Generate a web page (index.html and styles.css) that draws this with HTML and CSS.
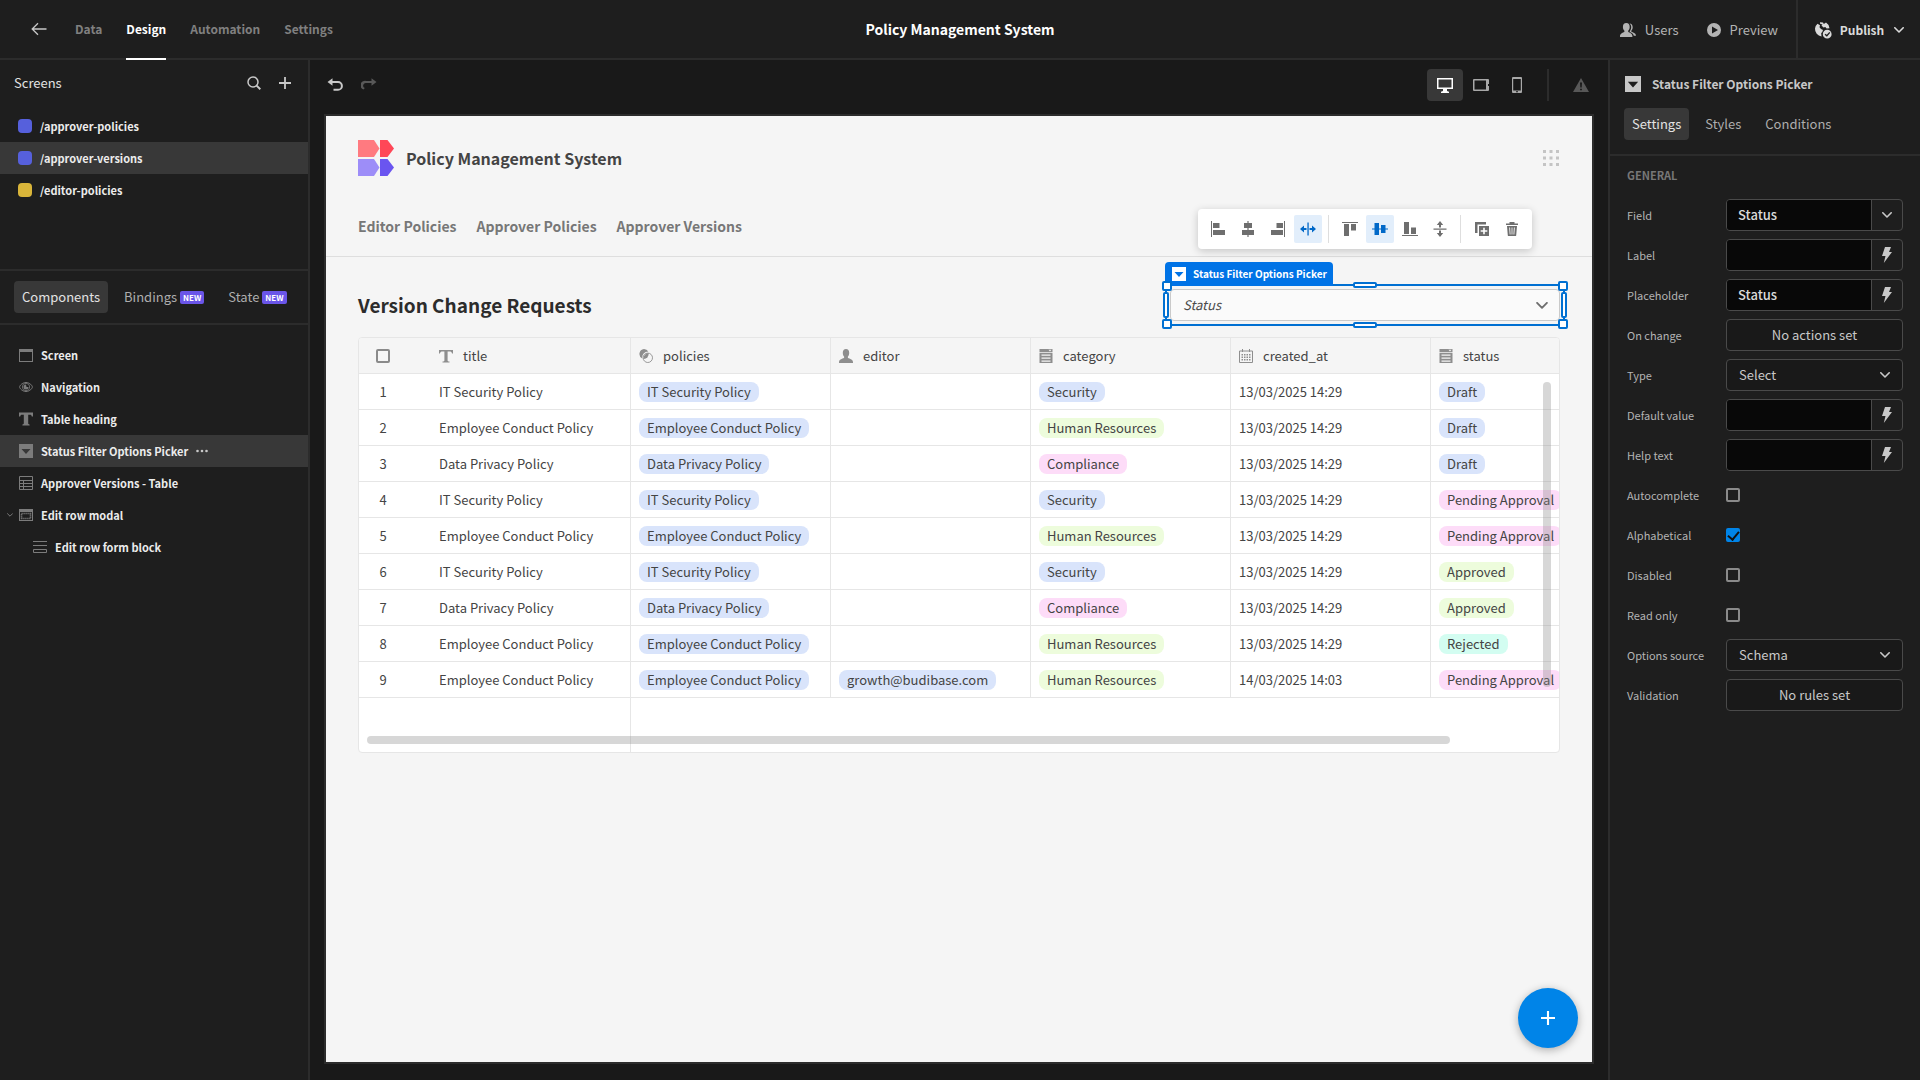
FILE: index.html
```html
<!DOCTYPE html>
<html lang="en">
<head>
    <meta charset="UTF-8">
    <meta name="viewport" content="width=device-width, initial-scale=1.0">
    <title>Policy Management System</title>
    <link rel="stylesheet" href="styles.css">
</head>
<body>
    <!-- Icon sprite -->
    <svg class="sprite" aria-hidden="true">
        <symbol id="i-back" viewBox="0 0 16 14"><path d="M15.500 7H1.500M7 1.200 1.200 7 7 12.800" fill="none" stroke="currentColor" stroke-width="1.300"/></symbol>
        <symbol id="i-users" viewBox="0 0 16 14"><path d="M6.300 0C8.600 0 9.700 1.600 9.700 3.900c0 1.700-.7 2.900-1.500 3.800v1c0 .5 4.200 1.300 4.200 4.200V14H0v-1.100C0 10 4.400 9.200 4.400 8.700v-1C3.600 6.800 2.900 5.600 2.900 3.900 2.900 1.600 4 0 6.300 0z"/><path d="M9.500.5c2 .1 3.200 1.600 3.200 3.700 0 1.500-.5 2.700-1.400 3.500v.9c0 .5 4.700 1.300 4.700 4.100h-2.200c-.4-2.400-2.600-3.100-4-3.700V8.200c.8-1 1.400-2.400 1.400-4.100 0-1.500-.6-2.800-1.700-3.600z"/></symbol>
        <symbol id="i-user" viewBox="0 0 14 14"><path d="M7 0c2.100 0 3.200 1.600 3.200 3.700 0 1.700-.5 3-1.300 3.900v1.200c0 .8 5.100 1 5.100 4.200v1H0v-1c0-3.200 5.100-3.400 5.100-4.200V7.600c-.8-.9-1.300-2.200-1.300-3.900C3.800 1.600 4.900 0 7 0z"/></symbol>
        <symbol id="i-play" viewBox="0 0 14 14"><path fill-rule="evenodd" d="M7 0a7 7 0 1 0 0 14A7 7 0 0 0 7 0zM5 3.500v7L11 7z"/></symbol>
        <symbol id="i-globe" viewBox="0 0 18 18"><path d="M3.500 2.800 6 4.300l-.5 2 1.500 1.700 2 1-.8 2.300-1 .7.300 3.400A7.500 7.500 0 0 1 1 7.500a7.500 7.500 0 0 1 2.500-4.700zM6 1.300l3 .2.800 1.400 2.200-1.300a7.500 7.500 0 0 1 3.500 5.600l-2.900.2-1.300-1.500-1.800.6-2-1.900 1-1.200-2.400-.6z"/><path fill-rule="evenodd" d="M13.200 8.800a4.400 4.400 0 1 0 0 8.800 4.400 4.400 0 0 0 0-8.800zm2.100 2.100 1 .8-3.400 4-2.300-2 .9-1 1.300 1.100z"/></symbol>
        <symbol id="i-chevron" viewBox="0 0 10 6"><path d="M.8.800 5 5 9.200.8" fill="none" stroke="currentColor" stroke-width="1.600" stroke-linecap="round" stroke-linejoin="round"/></symbol>
        <symbol id="i-search" viewBox="0 0 14 14"><g fill="none" stroke="currentColor" stroke-width="1.500"><circle cx="6" cy="6" r="5"/><path d="m9.600 9.600 3.700 3.700" stroke-width="2"/></g></symbol>
        <symbol id="i-plus" viewBox="0 0 12 12"><path d="M6 0v12M0 6h12" fill="none" stroke="currentColor" stroke-width="1.800"/></symbol>
        <symbol id="i-undo" viewBox="0 0 16 14"><path d="M5.500.2V3H11a4.500 4.500 0 0 1 0 9.800H6.500v-2H11a2.500 2.500 0 0 0 0-5.800H5.500v2.800L.5 4z"/></symbol>
        <symbol id="i-redo" viewBox="0 0 16 14"><path d="M10.500.2V3H5.500a4.500 4.500 0 0 0-3 8.600l1.300-1.500A2.700 2.700 0 0 1 5.500 5h5v2.800l5-3.800z"/></symbol>
        <symbol id="i-desktop" viewBox="0 0 16 16"><path fill-rule="evenodd" d="M0 1h16v11h-6v2l2 .8V16H4v-1.200l2-.8v-2H0zm1.500 1.500v8h13v-8z"/></symbol>
        <symbol id="i-tablet" viewBox="0 0 16 14"><path fill-rule="evenodd" d="M1 1h14a1 1 0 0 1 1 1v4h-1v2h1v4a1 1 0 0 1-1 1H1a1 1 0 0 1-1-1V2a1 1 0 0 1 1-1zm.5 1.500v9H13v-9z"/></symbol>
        <symbol id="i-phone" viewBox="0 0 10 16"><path fill-rule="evenodd" d="M1 0h8a1 1 0 0 1 1 1v14a1 1 0 0 1-1 1H1a1 1 0 0 1-1-1V1a1 1 0 0 1 1-1zm.2 2v11.500h7.600V2zM4 14.300v.9h2v-.9z"/></symbol>
        <symbol id="i-alert" viewBox="0 0 16 14"><path fill-rule="evenodd" d="M8 0 16 14H0zM7 4.500l.3 5h1.400l.3-5zm.1 6.200v1.600h1.800v-1.600z"/></symbol>
        <symbol id="i-window" viewBox="0 0 14 14"><path fill-rule="evenodd" d="M0 1h14v13H0zm1 3v9h12V4z"/></symbol>
        <symbol id="i-eye" viewBox="0 0 14 14"><path d="M7 2.500c3.800 0 6.400 3.300 6.400 4.500S10.800 11.500 7 11.500.6 8.200.6 7 3.200 2.500 7 2.500z" fill="none" stroke="currentColor"/><circle cx="7" cy="7" r="3.700" fill="none" stroke="currentColor" stroke-width=".8"/><path d="M7 4.500A2.500 2.500 0 1 0 9.500 7H7.500z"/></symbol>
        <symbol id="i-text" viewBox="0 0 14 14"><path d="M0 1h14v3.500h-1C12.700 3 12 2.500 10.500 2.500H8.600v9c0 .8.600.9 1.900 1v1h-7v-1c1.300-.1 1.900-.2 1.900-1v-9H3.500C2 2.500 1.300 3 1 4.500H0z"/></symbol>
        <symbol id="i-text-bold" viewBox="0 0 14 14"><path d="M0 .5h14v4h-1.200C12.500 3.200 12 2.800 10.500 2.800H9.200v8.500c0 .9.400 1 1.400 1.100v1.100H3.400v-1.100c1-.1 1.400-.2 1.400-1.100V2.800H3.500C2 2.800 1.500 3.200 1.200 4.500H0z"/></symbol>
        <symbol id="i-picker" viewBox="0 0 14 14"><path fill-rule="evenodd" d="M0 0h14v14H0zM2.500 5 7 10l4.500-5z"/></symbol>
        <symbol id="i-table" viewBox="0 0 14 14"><path d="M.5.500h13v13H.5zM.5 4.500h13M.5 7.500h13M.5 10.500h13M4.500 4.500v9" fill="none" stroke="currentColor"/></symbol>
        <symbol id="i-modal" viewBox="0 0 14 14"><path fill-rule="evenodd" d="M0 1h14v12H0zm1 3v8h12V4z"/><path d="M2.500 5.500h9v5h-9z" fill="none" stroke="currentColor" stroke-width="1.600" stroke-dasharray="1.200 .8"/></symbol>
        <symbol id="i-form" viewBox="0 0 14 14"><path d="M0 1.500h14M0 5.500h14M.5 9.500h13v3H.5z" fill="none" stroke="currentColor"/></symbol>
        <symbol id="i-more" viewBox="0 0 12 4"><circle cx="1.500" cy="2" r="1.300"/><circle cx="6" cy="2" r="1.300"/><circle cx="10.500" cy="2" r="1.300"/></symbol>
        <symbol id="i-grid" viewBox="0 0 16 16"><path d="M0 0h3v3H0zM6.500 0h3v3h-3zM13 0h3v3h-3zM0 6.500h3v3H0zM6.500 6.500h3v3h-3zM13 6.500h3v3h-3zM0 13h3v3H0zM6.500 13h3v3h-3zM13 13h3v3h-3z"/></symbol>
        <symbol id="i-left" viewBox="0 0 16 16"><path d="M1 0h1v16H1zM3 2h6.500v5H3zM3 9h12v5H3z"/></symbol>
        <symbol id="i-center" viewBox="0 0 16 16"><path d="M7.400 0h1.200v16H7.400zM4 2h8v5H4zM2 9h12v5H2z"/></symbol>
        <symbol id="i-right" viewBox="0 0 16 16"><path d="M14 0h1v16h-1zM6.500 2H13v5H6.500zM1 9h12v5H1z"/></symbol>
        <symbol id="i-stretch" viewBox="0 0 16 16"><path d="M7.400 1.500h1.300v13H7.400zM4 4.500V7h2.500v2H4v2.500L0 8zM12 4.500V7H9.500v2H12v2.500L16 8z"/></symbol>
        <symbol id="i-top" viewBox="0 0 16 16"><path d="M0 1h16v1H0zM2 3h5v12H2zM9 3h5v6.500H9z"/></symbol>
        <symbol id="i-middle" viewBox="0 0 16 16"><path d="M0 7.400h16v1.200H0zM2.500 2H7v12H2.500zM9 4h4.500v8H9z"/></symbol>
        <symbol id="i-bottom" viewBox="0 0 16 16"><path d="M0 14h16v1H0zM2 1h5v12H2zM9 6.500h5V13H9z"/></symbol>
        <symbol id="i-vstretch" viewBox="0 0 16 16"><path d="M1.500 7.400h13v1.300h-13zM4.800 4H7v2.500h2V4h2.200L8 0zM4.800 12H7V9.500h2V12h2.200L8 16z"/></symbol>
        <symbol id="i-duplicate" viewBox="0 0 16 16"><path d="M1 1h11v2.500H3.500V12H1z"/><path fill-rule="evenodd" d="M5 5h10v10H5zm4.200 1.700v2.500H6.700v1.600h2.500v2.500h1.600v-2.500h2.500V9.200h-2.500V6.700z"/></symbol>
        <symbol id="i-trash" viewBox="0 0 16 16"><path fill-rule="evenodd" d="M5.500 1h5v1.500H14V4H2V2.500h3.500zM3 5h10l-.8 9.500a.8.8 0 0 1-.8.6H4.600a.8.8 0 0 1-.8-.6zm2.200 1.500.5 7h.8l-.4-7zm2.400 0v7h.8v-7zm2.300 0-.4 7h.8l.5-7z"/></symbol>
        <symbol id="i-link" viewBox="0 0 14 14"><path d="M5 0a5 5 0 0 1 4.300 2.500 6 6 0 0 0-6 7A5 5 0 0 1 5 0z"/><circle cx="8.800" cy="8.800" r="4.700" fill="none" stroke="currentColor" stroke-width=".9"/><path d="M9.600 4a5 5 0 0 1-5.200 5.900A5.600 5.600 0 0 1 9.600 4z"/></symbol>
        <symbol id="i-date" viewBox="0 0 14 14"><path d="M.5 2h13v11.500H.5zM3.500 0v3M10.500 0v3" fill="none" stroke="currentColor"/><path d="M2.500 5.800h9M2.500 8.300h9M2.500 10.800h9" fill="none" stroke="currentColor" stroke-width="1.500" stroke-dasharray="1.500 1"/></symbol>
        <symbol id="i-options" viewBox="0 0 14 14"><path fill-rule="evenodd" d="M.5 0h13v3.200H.5zM9.500.8l1.500 1.800L12.500.8zM.5 4h13v10H.5zm2 1.500v1.200h9V5.500zm0 3v1.200h9V8.500zm0 3v1.200h9v-1.200z"/></symbol>
        <symbol id="i-bolt" viewBox="0 0 10 16"><path d="M3 0h6L7 5h3L1.800 16l1.700-7H0z"/></symbol>
    </svg>

    <header class="topbar">
        <nav class="top-nav">
            <a class="back" href="#" aria-label="Back"><svg width="16" height="14"><use href="#i-back"/></svg></a>
            <a href="#">Data</a>
            <a class="active" href="#">Design</a>
            <a href="#">Automation</a>
            <a href="#">Settings</a>
        </nav>
        <h1>Policy Management System</h1>
        <div class="top-actions">
            <button class="users"><svg width="16" height="14"><use href="#i-users"/></svg>Users</button>
            <button class="preview-btn"><svg width="14" height="14"><use href="#i-play"/></svg>Preview</button>
            <button class="publish"><svg width="18" height="18"><use href="#i-globe"/></svg>Publish<svg class="caret" width="10" height="6"><use href="#i-chevron"/></svg></button>
        </div>
    </header>

    <div class="builder">
        <aside class="left-panel">
            <section class="screens">
                <div class="panel-head">
                    <h2>Screens</h2>
                    <button aria-label="Search"><svg width="14" height="14"><use href="#i-search"/></svg></button>
                    <button aria-label="Add screen"><svg width="12" height="12"><use href="#i-plus"/></svg></button>
                </div>
                <a class="screen" href="#"><span class="swatch"></span>/approver-policies</a>
                <a class="screen selected" href="#"><span class="swatch"></span>/approver-versions</a>
                <a class="screen" href="#"><span class="swatch yellow"></span>/editor-policies</a>
            </section>
            <div class="tabs left-tabs">
                <button class="active">Components</button>
                <button>Bindings<span class="new">NEW</span></button>
                <button>State<span class="new">NEW</span></button>
            </div>
            <nav class="tree">
                <a href="#"><svg width="14" height="14"><use href="#i-window"/></svg>Screen</a>
                <a href="#"><svg width="14" height="14"><use href="#i-eye"/></svg>Navigation</a>
                <a href="#"><svg width="14" height="14"><use href="#i-text-bold"/></svg>Table heading</a>
                <a class="selected" href="#"><svg width="14" height="14"><use href="#i-picker"/></svg>Status Filter Options Picker<svg class="more" width="12" height="4"><use href="#i-more"/></svg></a>
                <a href="#"><svg width="14" height="14"><use href="#i-table"/></svg>Approver Versions - Table</a>
                <a class="open" href="#"><svg class="arrow" width="6" height="4"><use href="#i-chevron"/></svg><svg width="14" height="14"><use href="#i-modal"/></svg>Edit row modal</a>
                <a class="child" href="#"><svg width="14" height="14"><use href="#i-form"/></svg>Edit row form block</a>
            </nav>
        </aside>

        <main class="center">
            <div class="canvas-bar">
                <button aria-label="Undo"><svg width="16" height="14"><use href="#i-undo"/></svg></button>
                <button class="dim" aria-label="Redo"><svg width="16" height="14"><use href="#i-redo"/></svg></button>
                <div class="devices">
                    <button class="active" aria-label="Desktop"><svg width="16" height="16"><use href="#i-desktop"/></svg></button>
                    <button aria-label="Tablet"><svg width="16" height="14"><use href="#i-tablet"/></svg></button>
                    <button aria-label="Mobile"><svg width="10" height="16"><use href="#i-phone"/></svg></button>
                </div>
                <button class="dim errors" aria-label="Errors"><svg width="16" height="14"><use href="#i-alert"/></svg></button>
            </div>

            <div class="canvas">
                <header class="app-head">
                    <svg width="36" height="36" viewBox="0 0 36 36">
                        <path d="M0 0h16l5.500 8.500L16 17H0z" fill="#ff7a80"/>
                        <path d="M22 0h7.500L36 8.500 29.500 17H22z" fill="#ff4757"/>
                        <path d="M0 19h16l5.500 8.500L16 36H0z" fill="#9d8df8"/>
                        <path d="M22 19h7.500l6.500 8.500-6.500 8.500H22z" fill="#6a55f0"/>
                    </svg>
                    <h2>Policy Management System</h2>
                    <button aria-label="Apps"><svg width="16" height="16"><use href="#i-grid"/></svg></button>
                </header>
                <nav class="app-nav">
                    <a href="#">Editor Policies</a>
                    <a href="#">Approver Policies</a>
                    <a href="#">Approver Versions</a>
                </nav>

                <div class="app-body">
                    <div class="title-row">
                        <h3>Version Change Requests</h3>
                        <div class="picker">
                            <select aria-label="Status">
                                <option>Status</option>
                            </select>
                            <svg width="12" height="7"><use href="#i-chevron"/></svg>

                            <!-- Selection frame and its handles -->
                            <div class="frame">
                                <span class="tag"><svg width="14" height="14"><use href="#i-picker"/></svg>Status Filter Options Picker</span>
                                <i class="side n"></i><i class="side s"></i><i class="side w"></i><i class="side e"></i>
                                <i class="corner nw"></i><i class="corner ne"></i><i class="corner sw"></i><i class="corner se"></i>
                            </div>

                            <div class="align-bar">
                                <button aria-label="Align left"><svg width="16" height="16"><use href="#i-left"/></svg></button>
                                <button aria-label="Align centre"><svg width="16" height="16"><use href="#i-center"/></svg></button>
                                <button aria-label="Align right"><svg width="16" height="16"><use href="#i-right"/></svg></button>
                                <button class="active" aria-label="Stretch horizontally"><svg width="16" height="16"><use href="#i-stretch"/></svg></button>
                                <hr>
                                <button aria-label="Align top"><svg width="16" height="16"><use href="#i-top"/></svg></button>
                                <button class="active" aria-label="Align middle"><svg width="16" height="16"><use href="#i-middle"/></svg></button>
                                <button aria-label="Align bottom"><svg width="16" height="16"><use href="#i-bottom"/></svg></button>
                                <button aria-label="Stretch vertically"><svg width="16" height="16"><use href="#i-vstretch"/></svg></button>
                                <hr>
                                <button aria-label="Duplicate"><svg width="16" height="16"><use href="#i-duplicate"/></svg></button>
                                <button aria-label="Delete"><svg width="16" height="16"><use href="#i-trash"/></svg></button>
                            </div>
                        </div>
                    </div>

                    <div class="grid">
                        <table>
                            <colgroup>
                                <col class="c-num"><col class="c-title"><col><col><col><col><col>
                            </colgroup>
                            <thead>
                                <tr>
                                    <th class="num"><input class="check" type="checkbox" aria-label="Select all"></th>
                                    <th><span class="th"><svg width="14" height="14"><use href="#i-text"/></svg>title</span></th>
                                    <th><span class="th"><svg width="14" height="14"><use href="#i-link"/></svg>policies</span></th>
                                    <th><span class="th"><svg width="14" height="14"><use href="#i-user"/></svg>editor</span></th>
                                    <th><span class="th"><svg width="14" height="14"><use href="#i-options"/></svg>category</span></th>
                                    <th><span class="th"><svg width="14" height="14"><use href="#i-date"/></svg>created_at</span></th>
                                    <th><span class="th"><svg width="14" height="14"><use href="#i-options"/></svg>status</span></th>
                                </tr>
                            </thead>
                            <tbody>
                                <tr>
                                    <td class="num">1</td><td>IT Security Policy</td>
                                    <td><span class="pill blue">IT Security Policy</span></td><td></td>
                                    <td><span class="pill blue">Security</span></td><td>13/03/2025 14:29</td>
                                    <td><span class="pill blue">Draft</span></td>
                                </tr>
                                <tr>
                                    <td class="num">2</td><td>Employee Conduct Policy</td>
                                    <td><span class="pill blue">Employee Conduct Policy</span></td><td></td>
                                    <td><span class="pill green">Human Resources</span></td><td>13/03/2025 14:29</td>
                                    <td><span class="pill blue">Draft</span></td>
                                </tr>
                                <tr>
                                    <td class="num">3</td><td>Data Privacy Policy</td>
                                    <td><span class="pill blue">Data Privacy Policy</span></td><td></td>
                                    <td><span class="pill pink">Compliance</span></td><td>13/03/2025 14:29</td>
                                    <td><span class="pill blue">Draft</span></td>
                                </tr>
                                <tr>
                                    <td class="num">4</td><td>IT Security Policy</td>
                                    <td><span class="pill blue">IT Security Policy</span></td><td></td>
                                    <td><span class="pill blue">Security</span></td><td>13/03/2025 14:29</td>
                                    <td><span class="pill pink">Pending Approval</span></td>
                                </tr>
                                <tr>
                                    <td class="num">5</td><td>Employee Conduct Policy</td>
                                    <td><span class="pill blue">Employee Conduct Policy</span></td><td></td>
                                    <td><span class="pill green">Human Resources</span></td><td>13/03/2025 14:29</td>
                                    <td><span class="pill pink">Pending Approval</span></td>
                                </tr>
                                <tr>
                                    <td class="num">6</td><td>IT Security Policy</td>
                                    <td><span class="pill blue">IT Security Policy</span></td><td></td>
                                    <td><span class="pill blue">Security</span></td><td>13/03/2025 14:29</td>
                                    <td><span class="pill green">Approved</span></td>
                                </tr>
                                <tr>
                                    <td class="num">7</td><td>Data Privacy Policy</td>
                                    <td><span class="pill blue">Data Privacy Policy</span></td><td></td>
                                    <td><span class="pill pink">Compliance</span></td><td>13/03/2025 14:29</td>
                                    <td><span class="pill green">Approved</span></td>
                                </tr>
                                <tr>
                                    <td class="num">8</td><td>Employee Conduct Policy</td>
                                    <td><span class="pill blue">Employee Conduct Policy</span></td><td></td>
                                    <td><span class="pill green">Human Resources</span></td><td>13/03/2025 14:29</td>
                                    <td><span class="pill teal">Rejected</span></td>
                                </tr>
                                <tr>
                                    <td class="num">9</td><td>Employee Conduct Policy</td>
                                    <td><span class="pill blue">Employee Conduct Policy</span></td>
                                    <td><span class="pill blue">growth@budibase.com</span></td>
                                    <td><span class="pill green">Human Resources</span></td><td>14/03/2025 14:03</td>
                                    <td><span class="pill pink">Pending Approval</span></td>
                                </tr>
                            </tbody>
                            <tfoot>
                                <tr><td class="num"></td><td></td><td colspan="5"></td></tr>
                            </tfoot>
                        </table>
                        <div class="v-scroll"></div>
                        <div class="h-scroll"></div>
                    </div>
                </div>

                <button class="fab" aria-label="Add component"><svg width="14" height="14"><use href="#i-plus"/></svg></button>
            </div>
        </main>

        <aside class="right-panel">
            <h2><svg width="16" height="16"><use href="#i-picker"/></svg>Status Filter Options Picker</h2>
            <div class="tabs">
                <button class="active">Settings</button>
                <button>Styles</button>
                <button>Conditions</button>
            </div>
            <form class="settings">
                <h3>GENERAL</h3>
                <div class="setting">
                    <label for="field">Field</label>
                    <div class="combo"><input id="field" type="text" value="Status"><button type="button" aria-label="Choose field"><svg width="10" height="6"><use href="#i-chevron"/></svg></button></div>
                </div>
                <div class="setting">
                    <label for="label">Label</label>
                    <div class="combo"><input id="label" type="text"><button type="button" aria-label="Bind label"><svg width="10" height="16"><use href="#i-bolt"/></svg></button></div>
                </div>
                <div class="setting">
                    <label for="placeholder">Placeholder</label>
                    <div class="combo"><input id="placeholder" type="text" value="Status"><button type="button" aria-label="Bind placeholder"><svg width="10" height="16"><use href="#i-bolt"/></svg></button></div>
                </div>
                <div class="setting">
                    <label for="on-change">On change</label>
                    <button class="wide" id="on-change" type="button">No actions set</button>
                </div>
                <div class="setting">
                    <label for="type">Type</label>
                    <div class="select"><select id="type"><option>Select</option></select><svg width="10" height="6"><use href="#i-chevron"/></svg></div>
                </div>
                <div class="setting">
                    <label for="default">Default value</label>
                    <div class="combo"><input id="default" type="text"><button type="button" aria-label="Bind default value"><svg width="10" height="16"><use href="#i-bolt"/></svg></button></div>
                </div>
                <div class="setting">
                    <label for="help">Help text</label>
                    <div class="combo"><input id="help" type="text"><button type="button" aria-label="Bind help text"><svg width="10" height="16"><use href="#i-bolt"/></svg></button></div>
                </div>
                <div class="setting">
                    <label for="autocomplete">Autocomplete</label>
                    <input class="check" id="autocomplete" type="checkbox">
                </div>
                <div class="setting">
                    <label for="alphabetical">Alphabetical</label>
                    <input class="check" id="alphabetical" type="checkbox" checked>
                </div>
                <div class="setting">
                    <label for="disabled">Disabled</label>
                    <input class="check" id="disabled" type="checkbox">
                </div>
                <div class="setting">
                    <label for="readonly">Read only</label>
                    <input class="check" id="readonly" type="checkbox">
                </div>
                <div class="setting">
                    <label for="source">Options source</label>
                    <div class="select"><select id="source"><option>Schema</option></select><svg width="10" height="6"><use href="#i-chevron"/></svg></div>
                </div>
                <div class="setting">
                    <label for="validation">Validation</label>
                    <button class="wide" id="validation" type="button">No rules set</button>
                </div>
            </form>
        </aside>
    </div>
</body>
</html>
```
FILE: styles.css
```css
* {
    box-sizing: border-box;
}

body {
    margin: 0;
    height: 100vh;
    display: flex;
    flex-direction: column;
    overflow: hidden;
    background: #1e1e1e;
    color: #c8c8c8;
    font-family: "Noto Sans CJK SC", "Noto Sans", sans-serif;
    font-size: 13px;
    line-height: 20px;
}

h1, h2, h3 {
    margin: 0;
    font-weight: 700;
}

a {
    color: inherit;
    text-decoration: none;
}

button, input, select {
    margin: 0;
    padding: 0;
    border: 0;
    background: none;
    color: inherit;
    font: inherit;
}

button {
    display: flex;
    align-items: center;
    justify-content: center;
}

svg {
    flex: none;
    fill: currentColor;
}

.sprite {
    position: absolute;
    width: 0;
    height: 0;
}

/* Top bar */
.topbar {
    display: grid;
    grid-template-columns: 1fr auto 1fr;
    flex: none;
    height: 60px;
    border-bottom: 2px solid #2c2c2c;
}

.topbar h1 {
    font-size: 14px;
    line-height: 58px;
    color: #fff;
}

.top-nav {
    display: flex;
    gap: 24px;
    padding-left: 31px;
    color: #808080;
    font-size: 12px;
    font-weight: 700;
}

.top-nav a {
    height: 60px;
    line-height: 58px;
}

.top-nav .back {
    display: flex;
    align-items: center;
    width: 20px;
    height: 58px;
    color: #c8c8c8;
}

.top-nav .active {
    color: #fff;
    border-bottom: 2px solid #fff;
}

.top-actions {
    display: flex;
    justify-content: flex-end;
}

.top-actions button {
    gap: 9px;
    color: #b4b4b4;
}

.top-actions .users {
    margin-right: 28px;
}

.top-actions .preview-btn {
    margin-right: 18px;
}

.top-actions .publish {
    gap: 8px;
    width: 124px;
    border-left: 2px solid #2c2c2c;
    font-size: 12px;
    font-weight: 700;
    color: #dadada;
}

.publish .caret {
    margin-left: 2px;
}

/* Left panel */
.builder {
    flex: 1;
    display: flex;
    min-height: 0;
}

.left-panel {
    flex: none;
    width: 310px;
    border-right: 2px solid #2c2c2c;
}

.screens {
    height: 211px;
    border-bottom: 2px solid #2c2c2c;
}

.panel-head {
    display: flex;
    align-items: center;
    gap: 18px;
    height: 46px;
    padding: 0 17px 0 14px;
    margin-bottom: 4px;
}

.panel-head h2 {
    flex: 1;
    font-size: 13px;
    font-weight: 400;
    color: #e3e3e3;
}

.screen {
    display: flex;
    align-items: center;
    gap: 8px;
    height: 32px;
    padding-left: 18px;
    font-size: 11px;
    font-weight: 700;
    color: #ececec;
}

.selected {
    background: #383838;
}

.swatch {
    width: 14px;
    height: 14px;
    border-radius: 4px;
    background: #5660dc;
}

.swatch.yellow {
    background: #d9b53a;
}

.tabs {
    display: flex;
    gap: 8px;
    color: #adadad;
}

.tabs button {
    height: 32px;
    padding: 0 8px;
    border-radius: 4px;
}

.tabs .active {
    background: #383838;
    color: #e3e3e3;
}

.left-tabs {
    height: 54px;
    padding: 10px 14px;
    border-bottom: 2px solid #2c2c2c;
}

.new {
    margin-left: 3px;
    padding: 0 3px;
    border-radius: 2px;
    background: #6a55e8;
    color: #fff;
    font-size: 8px;
    line-height: 13px;
    font-weight: 700;
}

.tree {
    padding-top: 14px;
}

.tree a {
    display: flex;
    align-items: center;
    gap: 8px;
    height: 32px;
    padding-left: 19px;
    font-size: 11px;
    font-weight: 700;
    color: #ececec;
}

.tree svg {
    color: #7c7c7c;
}

.tree .more {
    color: #c8c8c8;
}

.tree .open {
    gap: 8px;
    padding-left: 7px;
}

.tree .arrow {
    margin-right: -2px;
}

.tree .child {
    padding-left: 33px;
}

/* Canvas */
.center {
    flex: 1;
    min-width: 0;
    display: flex;
    flex-direction: column;
    padding: 0 14px 16px;
    background: #191919;
}

.canvas-bar {
    display: flex;
    align-items: center;
    gap: 18px;
    height: 54px;
    padding: 0 5px 4px 3px;
}

.canvas-bar .dim {
    color: #585858;
}

.devices {
    display: flex;
    margin-left: auto;
    margin-right: 6px;
    padding-right: 12px;
    border-right: 2px solid #2c2c2c;
}

.devices button {
    width: 36px;
    height: 32px;
    border-radius: 4px;
    color: #a8a8a8;
}

.devices .active {
    background: #383838;
    color: #fff;
}

.canvas {
    position: relative;
    flex: 1;
    border: 2px solid #2c2c2c;
    background: #f5f5f5;
    color: #444;
}

.app-head {
    display: flex;
    align-items: center;
    gap: 12px;
    padding: 24px 33px 24px 32px;
}

.app-head h2 {
    flex: 1;
    font-size: 16px;
    line-height: 24px;
}

.app-head button {
    color: #c4c4c4;
}

.app-nav {
    display: flex;
    gap: 20px;
    padding: 14px 32px 18px;
    border-bottom: 1px solid #dedede;
    font-size: 14px;
    line-height: 24px;
    font-weight: 700;
    color: #777;
}

.app-body {
    padding: 32px;
}

.title-row {
    display: flex;
    align-items: center;
    height: 32px;
    margin-bottom: 16px;
}

.title-row h3 {
    flex: 1;
    font-size: 19px;
    line-height: 32px;
    color: #2c2c2c;
}

.picker {
    position: relative;
    width: 390px;
    height: 32px;
}

.picker select {
    width: 100%;
    height: 32px;
    padding: 0 12px;
    appearance: none;
    border: 1px solid #cacaca;
    border-radius: 4px;
    background: #fafafa;
    color: #4b4b4b;
    font-style: italic;
}

.picker > svg {
    position: absolute;
    top: 13px;
    right: 12px;
    color: #6e6e6e;
}

.frame {
    position: absolute;
    inset: -5px;
    border: 2px solid #0070d2;
    pointer-events: none;
}

.tag {
    position: absolute;
    left: -2px;
    bottom: 100%;
    display: flex;
    align-items: center;
    gap: 7px;
    height: 24px;
    padding: 0 6px 0 7px;
    border-radius: 4px 4px 0 0;
    background: #0073e6;
    color: #fff;
    font-size: 10px;
    font-weight: 700;
    white-space: nowrap;
}

.side,
.corner {
    position: absolute;
    border: 2px solid #0070d2;
    border-radius: 2px;
    background: #fff;
}

.corner {
    width: 10px;
    height: 10px;
}

.side.n, .side.s {
    left: calc(50% - 12px);
    width: 24px;
    height: 6px;
}

.side.w, .side.e {
    top: calc(50% - 13px);
    width: 6px;
    height: 26px;
}

.side.n { top: -4px; }
.side.s { bottom: -4px; }
.side.w { left: -4px; }
.side.e { right: -4px; }
.corner.nw { top: -5px; left: -5px; }
.corner.ne { top: -5px; right: -5px; }
.corner.sw { bottom: -5px; left: -5px; }
.corner.se { bottom: -5px; right: -5px; }

.align-bar {
    position: absolute;
    right: 28px;
    bottom: 72px;
    display: flex;
    align-items: center;
    gap: 2px;
    padding: 6px;
    border-radius: 4px;
    background: #fff;
    box-shadow: 0 2px 8px rgba(0, 0, 0, 0.2);
    color: #6e6e6e;
}

.align-bar button {
    width: 28px;
    height: 28px;
    border-radius: 2px;
}

.align-bar .active {
    background: #e2eefb;
    color: #0068c8;
}

.align-bar hr {
    width: 1px;
    height: 28px;
    margin: 0 5px 0 4px;
    border: 0;
    background: #dedede;
}

/* Data grid */
.grid {
    position: relative;
    overflow: hidden;
    border: 1px solid #e6e6e6;
    border-radius: 4px;
    background: #fff;
}

table {
    width: 1272px;
    table-layout: fixed;
    border-collapse: separate;
    border-spacing: 0;
}

.c-num {
    width: 72px;
}

th, td {
    height: 36px;
    padding: 0 8px;
    border-right: 1px solid #e6e6e6;
    border-bottom: 1px solid #e6e6e6;
    text-align: left;
    font-weight: 400;
    white-space: nowrap;
}

th {
    background: #f5f5f5;
}

.num {
    padding: 0 24px 0 0;
    border-right: 0;
    text-align: center;
}

tfoot td {
    height: 54px;
    border-bottom: 0;
}

.th {
    display: flex;
    align-items: center;
    gap: 10px;
}

.th svg {
    color: #8e8e8e;
}

.pill {
    display: inline-block;
    padding: 0 8px;
    border-radius: 8px;
    line-height: 20px;
}

.blue { background: #d9e4fb; }
.green { background: #edfcdc; }
.pink { background: #fddcf8; }
.teal { background: #d3fdf1; }

.v-scroll,
.h-scroll {
    position: absolute;
    border-radius: 4px;
    background: rgba(140, 140, 140, 0.35);
}

.v-scroll {
    top: 44px;
    right: 8px;
    bottom: 65px;
    width: 8px;
}

.h-scroll {
    left: 8px;
    right: 109px;
    bottom: 8px;
    height: 8px;
}

.fab {
    position: absolute;
    right: 14px;
    bottom: 14px;
    width: 60px;
    height: 60px;
    border-radius: 50%;
    background: #0084e8;
    color: #fff;
    box-shadow: 0 2px 8px rgba(0, 0, 0, 0.3);
}

/* Check boxes */
.check {
    display: block;
    width: 14px;
    height: 14px;
    appearance: none;
    border: 2px solid #8a8a8a;
    border-radius: 2px;
}

th .check {
    margin: 0 auto;
}

.check:checked {
    display: grid;
    place-items: center;
    border-color: #0084e8;
    background: #0084e8;
}

.check:checked::before {
    content: "";
    width: 5px;
    height: 9px;
    border: solid #111;
    border-width: 0 2px 2px 0;
    transform: translateY(-1px) rotate(40deg);
}

/* Right panel */
.right-panel {
    flex: none;
    width: 312px;
    border-left: 2px solid #2c2c2c;
}

.right-panel h2 {
    display: flex;
    align-items: center;
    gap: 11px;
    height: 48px;
    padding-left: 15px;
    font-size: 12px;
    color: #c8c8c8;
}

.right-panel .tabs {
    height: 48px;
    padding: 0 14px;
    border-bottom: 2px solid #2c2c2c;
}

.settings {
    padding: 9px 17px 0 17px;
}

.settings h3 {
    margin-bottom: 14px;
    font-size: 11px;
    color: #777;
}

.setting {
    display: grid;
    grid-template-columns: 99px 1fr;
    align-items: center;
    height: 32px;
    margin-bottom: 8px;
}

.setting label {
    font-size: 11px;
    color: #b4b4b4;
}

.combo {
    display: flex;
    height: 32px;
    overflow: hidden;
    border: 1px solid #4a4a4a;
    border-radius: 4px;
}

.combo input {
    flex: 1;
    min-width: 0;
    padding: 0 11px;
    background: #080808;
    color: #dadada;
    font-weight: 500;
}

.combo button {
    width: 31px;
    border-left: 1px solid #4a4a4a;
}

.wide,
.select select {
    width: 100%;
    height: 32px;
    border: 1px solid #4a4a4a;
    border-radius: 4px;
    background: #191919;
}

.select {
    position: relative;
}

.select select {
    padding: 0 12px;
    appearance: none;
}

.select svg {
    position: absolute;
    top: 13px;
    right: 13px;
}
```
